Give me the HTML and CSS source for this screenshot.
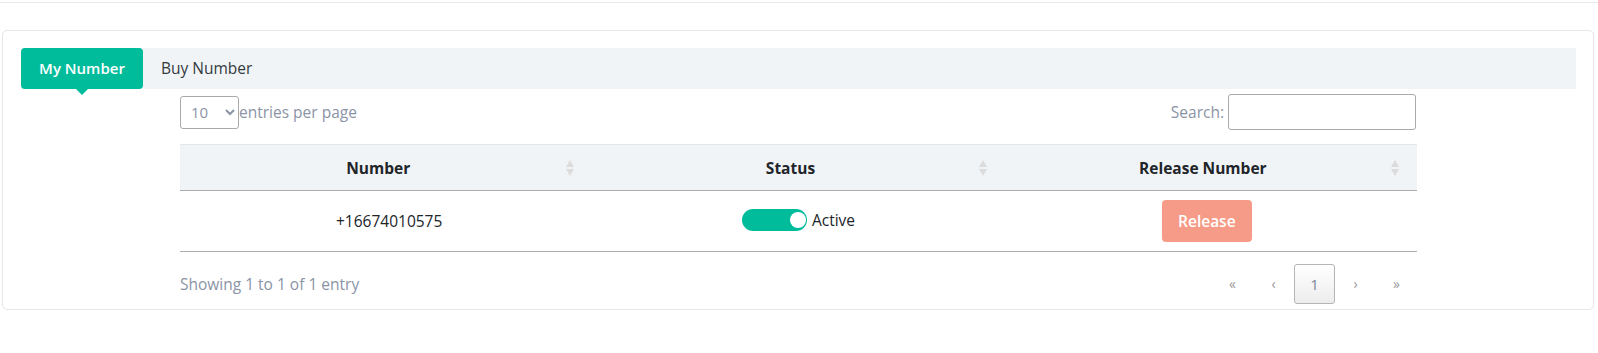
FILE: index.html
```html
<!DOCTYPE html>
<html lang="en">
<head>
    <meta charset="UTF-8">
    <meta name="viewport" content="width=device-width, initial-scale=1.0">
    <title>My Number</title>
    <link rel="stylesheet" href="styles.css">
</head>
<body>
    <div class="topline"></div>
    <div class="kart">
        <div class="sekmeler">
            <div class="sekme aktif">My Number</div>
            <div class="sekme">Buy Number</div>
        </div>
        <div class="tablo-alan">
            <div class="ust">
                <div class="uzunluk">
                    <select class="secim">
                        <option>10</option>
                        <option>25</option>
                        <option>50</option>
                    </select>
                    <span>entries per page</span>
                </div>
                <div class="arama">
                    <label for="ara">Search:</label>
                    <input id="ara" class="arama-kutu" type="search">
                </div>
            </div>
            <table class="tablo">
                <thead>
                    <tr>
                        <th>Number<span class="ok"></span></th>
                        <th>Status<span class="ok"></span></th>
                        <th>Release Number<span class="ok"></span></th>
                    </tr>
                </thead>
                <tbody>
                    <tr>
                        <td class="numara">+16674010575</td>
                        <td>
                            <span class="durum">
                                <span class="anahtar"><span class="topuz"></span></span>Active
                            </span>
                        </td>
                        <td><button class="birak">Release</button></td>
                    </tr>
                </tbody>
            </table>
            <div class="alt">
                <div class="bilgi">Showing 1 to 1 of 1 entry</div>
                <div class="sayfalar">
                    <span class="sayfa">&laquo;</span>
                    <span class="sayfa">&lsaquo;</span>
                    <span class="sayfa secili">1</span>
                    <span class="sayfa">&rsaquo;</span>
                    <span class="sayfa">&raquo;</span>
                </div>
            </div>
        </div>
    </div>
</body>
</html>
```

FILE: styles.css
```css
body {
    margin: 0;
    background-color: white;
    font-family: "Open Sans", "Noto Sans", Arial, sans-serif;
    font-size: 15.5px;
    color: #212529;
}
.topline {
    height: 2px;
    border-bottom: 1px solid #e8e8e8;
}
.kart {
    margin: 27px 4px 0 2px;
    border: 1px solid #e6e6e6;
    border-radius: 5px;
    padding: 17px 17px 5px 18px;
}
.sekmeler {
    display: flex;
    align-items: center;
    height: 41px;
    background-color: #f1f4f7;
}
.sekme {
    height: 41px;
    line-height: 41px;
    padding: 0 18px;
    color: #343a40;
    font-size: 15.5px;
    font-weight: 500;
}
.sekme.aktif {
    position: relative;
    width: 122px;
    box-sizing: border-box;
    text-align: center;
    background-color: #00bc9b;
    color: white;
    font-size: 15px;
    font-weight: 600;
    border-radius: 4px;
}
.sekme.aktif::after {
    content: "";
    position: absolute;
    left: 55px;
    top: 41px;
    border-left: 6px solid transparent;
    border-right: 6px solid transparent;
    border-top: 6px solid #00bc9b;
}
.tablo-alan {
    margin-left: 159px;
    width: 1237px;
}
.ust {
    display: flex;
    justify-content: space-between;
    align-items: center;
    margin-top: 5px;
    color: #8a94a6;
}
.uzunluk {
    display: flex;
    align-items: center;
}
.secim {
    width: 59px;
    height: 33px;
    padding: 0 6px;
    border: 1px solid #aaa;
    border-radius: 3px;
    background-color: white;
    color: #8a94a6;
    font-family: inherit;
    font-size: 15px;
}
.arama {
    display: flex;
    align-items: center;
    gap: 4px;
}
.arama-kutu {
    width: 188px;
    height: 36px;
    box-sizing: border-box;
    border: 1px solid #aaa;
    border-radius: 3px;
    margin-right: 1px;
}
.tablo {
    width: 1237px;
    margin-top: 14px;
    border-collapse: collapse;
    table-layout: fixed;
}
.tablo th {
    position: relative;
    height: 46px;
    box-sizing: border-box;
    padding: 0 26px 0 10px;
    background-color: #f1f4f7;
    border-top: 1px solid #e3e6ea;
    border-bottom: 1px solid #adadad;
    font-weight: 700;
    text-align: center;
}
.ok {
    position: absolute;
    right: 18px;
    top: 15px;
    width: 8px;
    height: 16px;
}
.ok::before, .ok::after {
    content: "";
    position: absolute;
    left: 0;
    border-left: 4px solid transparent;
    border-right: 4px solid transparent;
}
.ok::before {
    top: 0;
    border-bottom: 7px solid #dcdcdc;
}
.ok::after {
    bottom: 0;
    border-top: 7px solid #dcdcdc;
}
.tablo td {
    height: 60px;
    padding: 0 10px;
    text-align: center;
    border-bottom: 1px solid #adadad;
}
.tablo td.numara {
    padding-left: 16px;
}
.durum {
    display: inline-flex;
    align-items: center;
    gap: 5px;
}
.anahtar {
    display: flex;
    justify-content: flex-end;
    align-items: center;
    width: 65px;
    height: 22px;
    padding: 0 1px;
    box-sizing: border-box;
    border-radius: 11px;
    background-color: #00bc9b;
}
.topuz {
    width: 16px;
    height: 16px;
    border-radius: 50%;
    background-color: white;
}
.birak {
    width: 90px;
    height: 42px;
    margin-right: 8px;
    border: none;
    border-radius: 4px;
    background-color: #f69b88;
    color: white;
    font-family: inherit;
    font-size: 15.5px;
    font-weight: 600;
}
.alt {
    display: flex;
    justify-content: space-between;
    align-items: center;
    margin-top: 12px;
}
.bilgi {
    color: #8a94a6;
}
.sayfalar {
    display: flex;
}
.sayfa {
    width: 41px;
    height: 40px;
    line-height: 38px;
    box-sizing: border-box;
    text-align: center;
    color: #999;
    font-size: 14px;
    border: 1px solid transparent;
}
.sayfa.secili {
    color: #7d8797;
    font-size: 15px;
    border-color: #b5b5b5;
    border-radius: 3px;
    background: linear-gradient(to bottom, white 0%, #ececec 100%);
}
```
